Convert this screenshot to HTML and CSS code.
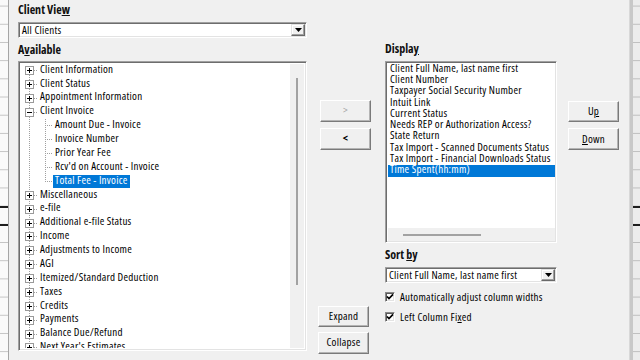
FILE: index.html
```html
<!DOCTYPE html>
<html>
<head>
<meta charset="utf-8">
<link rel="stylesheet" href="styles.css">
</head>
<body>
<div class="sheet-left"></div>
<div class="dialog">
  <div class="col col-a">
    <div class="label l-view">Client Vie<u>w</u></div>
    <div class="combo combo-view">
      <span class="combo-text">All Clients</span>
      <span class="drop"><svg width="7" height="4" viewBox="0 0 7 4"><path d="M0 0H7L3.5 4Z" fill="#000"/></svg></span>
    </div>
    <div class="label l-avail">A<u>v</u>ailable</div>
    <div class="tree sunken">
      <div class="tree-list">
        <div class="node"><span class="exp plus"></span><span class="conn"></span><span class="txt">Client Information</span></div>
        <div class="node"><span class="exp plus"></span><span class="conn"></span><span class="txt">Client Status</span></div>
        <div class="node"><span class="exp plus"></span><span class="conn"></span><span class="txt">Appointment Information</span></div>
        <div class="node"><span class="exp minus"></span><span class="conn"></span><span class="txt">Client Invoice</span></div>
        <div class="children">
          <div class="node"><span class="conn2"></span><span class="txt">Amount Due - Invoice</span></div>
          <div class="node"><span class="conn2"></span><span class="txt">Invoice Number</span></div>
          <div class="node"><span class="conn2"></span><span class="txt">Prior Year Fee</span></div>
          <div class="node"><span class="conn2"></span><span class="txt">Rcv'd on Account - Invoice</span></div>
          <div class="node"><span class="conn2"></span><span class="txt sel">Total Fee - Invoice</span></div>
        </div>
        <div class="node"><span class="exp plus"></span><span class="conn"></span><span class="txt">Miscellaneous</span></div>
        <div class="node"><span class="exp plus"></span><span class="conn"></span><span class="txt">e-file</span></div>
        <div class="node"><span class="exp plus"></span><span class="conn"></span><span class="txt">Additional e-file Status</span></div>
        <div class="node"><span class="exp plus"></span><span class="conn"></span><span class="txt">Income</span></div>
        <div class="node"><span class="exp plus"></span><span class="conn"></span><span class="txt">Adjustments to Income</span></div>
        <div class="node"><span class="exp plus"></span><span class="conn"></span><span class="txt">AGI</span></div>
        <div class="node"><span class="exp plus"></span><span class="conn"></span><span class="txt">Itemized/Standard Deduction</span></div>
        <div class="node"><span class="exp plus"></span><span class="conn"></span><span class="txt">Taxes</span></div>
        <div class="node"><span class="exp plus"></span><span class="conn"></span><span class="txt">Credits</span></div>
        <div class="node"><span class="exp plus"></span><span class="conn"></span><span class="txt">Payments</span></div>
        <div class="node"><span class="exp plus"></span><span class="conn"></span><span class="txt">Balance Due/Refund</span></div>
        <div class="node"><span class="exp plus"></span><span class="conn"></span><span class="txt">Next Year's Estimates</span></div>
      </div>
      <div class="vscroll"><div class="vthumb"></div></div>
    </div>
  </div>

  <div class="col col-b">
    <div class="btn btn-add disabled">&gt;</div>
    <div class="btn btn-remove">&lt;</div>
    <div class="btn btn-expand">Expand</div>
    <div class="btn btn-collapse">Collapse</div>
  </div>

  <div class="col col-c">
    <div class="label l-display">Displa<u>y</u></div>
    <div class="dlist sunken">
      <div class="dl-items">
        <div class="dl-item">Client Full Name, last name first</div>
        <div class="dl-item">Client Number</div>
        <div class="dl-item">Taxpayer Social Security Number</div>
        <div class="dl-item">Intuit Link</div>
        <div class="dl-item">Current Status</div>
        <div class="dl-item">Needs REP or Authorization Access?</div>
        <div class="dl-item">State Return</div>
        <div class="dl-item">Tax Import - Scanned Documents Status</div>
        <div class="dl-item">Tax Import - Financial Downloads Status</div>
        <div class="dl-item sel">Time Spent(hh:mm)</div>
      </div>
      <div class="hscroll"><div class="hthumb"></div></div>
    </div>
    <div class="label l-sort">Sort <u>b</u>y</div>
    <div class="combo combo-sort">
      <span class="combo-text">Client Full Name, last name first</span>
      <span class="drop"><svg width="7" height="4" viewBox="0 0 7 4"><path d="M0 0H7L3.5 4Z" fill="#000"/></svg></span>
    </div>
    <div class="chk chk-1"><span class="box"><svg width="8" height="8" viewBox="0 0 8 8"><path d="M1 3.5L3 5.6L7 1.4" fill="none" stroke="#000" stroke-width="1.7"/></svg></span><span class="chk-text">Automatically adjust column widths</span></div>
    <div class="chk chk-2"><span class="box"><svg width="8" height="8" viewBox="0 0 8 8"><path d="M1 3.5L3 5.6L7 1.4" fill="none" stroke="#000" stroke-width="1.7"/></svg></span><span class="chk-text">Left Column Fi<u>x</u>ed</span></div>
  </div>

  <div class="col col-d">
    <div class="btn btn-up">U<u>p</u></div>
    <div class="btn btn-down"><u>D</u>own</div>
  </div>
</div>
<div class="sheet-right"><div class="bar"></div><div class="cells"></div></div>
</body>
</html>
```

FILE: styles.css
```css
* { box-sizing: border-box; }
html, body { margin: 0; padding: 0; }
body {
  width: 640px;
  height: 360px;
  overflow: hidden;
  display: flex;
  background: #f0f0f0;
  font-family: "Open Sans", "Liberation Sans", Arial, sans-serif;
  font-stretch: 75%;
  font-size: 11px;
  letter-spacing: 0.25px;
  color: #000;
}
u { text-decoration: underline; text-underline-offset: 1px; }

/* spreadsheet edges */
.sheet-left {
  width: 9px;
  flex: none;
  border-right: 1px solid #a6a6a6;
  background-color: #fafafa;
  background-image:
    linear-gradient(to bottom, transparent 206px, #1e1e1e 206px, #1e1e1e 208px, transparent 208px, transparent 224px, #1e1e1e 224px, #1e1e1e 226px, transparent 226px),
    linear-gradient(to bottom, #c4c4c4 0, #c4c4c4 1px, transparent 1px);
  background-size: 100% 100%, 100% 18.2px;
  background-position: 0 0, 0 5.6px;
  background-repeat: no-repeat, repeat;
}
.sheet-right {
  width: 11px;
  flex: none;
  display: flex;
}
.sheet-right .bar {
  width: 4px;
  background: #c8c8c8;
  border-left: 1px solid #d8d8d8;
}
.sheet-right .cells {
  flex: 1;
  background-color: #ececec;
  background-image:
    linear-gradient(to bottom, transparent 206px, #1e1e1e 206px, #1e1e1e 208px, transparent 208px, transparent 224px, #1e1e1e 224px, #1e1e1e 226px, transparent 226px),
    linear-gradient(to bottom, #bdbdbd 0, #bdbdbd 1.2px, transparent 1.2px);
  background-size: 100% 100%, 100% 18.2px;
  background-position: 0 0, 0 5.6px;
  background-repeat: no-repeat, repeat;
}

/* dialog */
.dialog {
  flex: 1;
  display: flex;
  padding-left: 9px;
  background: #f0f0f0;
}
.col { display: flex; flex-direction: column; flex: none; }
.label {
  font-weight: bold;
  font-size: 12px;
  letter-spacing: 0;
  height: 13px;
  line-height: 12px;
  padding-bottom: 1px;
  color: #111;
}

.sunken {
  border: 1px solid;
  border-color: #a0a0a0 #ffffff #ffffff #a0a0a0;
  box-shadow: inset 1px 1px 0 #6d6d6d, inset -1px -1px 0 #e3e3e3;
}

/* combo */
.combo {
  height: 16px;
  display: flex;
  align-items: stretch;
  background: #fff;
  border: 1px solid;
  border-color: #a0a0a0 #ffffff #ffffff #a0a0a0;
  box-shadow: inset 1px 1px 0 #6d6d6d, inset -1px -1px 0 #e3e3e3;
  padding: 1px;
}
.combo-text {
  flex: 1;
  padding-left: 2px;
  line-height: 11px;
  padding-bottom: 1px;
  white-space: nowrap;
}
.drop {
  width: 14px;
  flex: none;
  display: flex;
  align-items: center;
  justify-content: center;
  background: #f0f0f0;
  border: 1px solid;
  border-color: #e3e3e3 #696969 #696969 #e3e3e3;
  box-shadow: inset -1px -1px 0 #a0a0a0, inset 1px 1px 0 #fff;
}

/* column A */
.col-a { width: 289px; }
.l-view { margin-top: 4px; }
.combo-view { margin-top: 4.5px; }
.l-avail { margin-top: 6px; }
.tree {
  margin-top: 4px;
  height: 290px;
  display: flex;
  padding: 2px;
  background: #fff;
}
.tree-list {
  flex: 1;
  overflow: hidden;
  background-image: repeating-linear-gradient(to bottom, #a0a0a0 0, #a0a0a0 1px, transparent 1px, transparent 2px);
  background-size: 1px 100%;
  background-position: 8px 7px;
  background-repeat: no-repeat;
}
.node {
  height: 13.88px;
  display: flex;
  align-items: center;
  white-space: nowrap;
}
.exp {
  width: 9px;
  height: 9px;
  margin-left: 4px;
  flex: none;
  border: 1px solid #9a9a9a;
  background: #fff;
  position: relative;
}
.exp::before {
  content: "";
  position: absolute;
  left: 1px;
  top: 3px;
  width: 5px;
  height: 1px;
  background: #000;
}
.exp.plus::after {
  content: "";
  position: absolute;
  left: 3px;
  top: 1px;
  width: 1px;
  height: 5px;
  background: #000;
}
.conn, .conn2 {
  height: 1px;
  flex: none;
  background-image: repeating-linear-gradient(to right, #a0a0a0 0, #a0a0a0 1px, transparent 1px, transparent 2px);
}
.conn { width: 4px; }
.conn2 { width: 8px; margin-left: 24px; }
.txt {
  padding: 0 2px 3px;
  height: 13.4px;
  line-height: 10.4px;
}
.txt.sel { background: #0078d7; color: #fff; }
.children {
  background-image: repeating-linear-gradient(to bottom, #a0a0a0 0, #a0a0a0 1px, transparent 1px, transparent 2px);
  background-size: 1px calc(100% - 7px);
  background-position: 24px 0;
  background-repeat: no-repeat;
}
.vscroll {
  width: 14px;
  flex: none;
  background: #f0f0f0;
  padding-top: 14px;
  padding-left: 6px;
}
.vthumb {
  width: 2px;
  height: 207px;
  background: #a2a2a2;
}

/* column B */
.col-b { width: 53px; margin-left: 11px; }
.btn {
  width: 51px;
  height: 22px;
  display: flex;
  align-items: center;
  justify-content: center;
  background: #f0f0f0;
  border: 1px solid;
  border-color: #ffffff #7a7a7a #7a7a7a #ffffff;
  box-shadow: inset -1px -1px 0 #b4b4b4;
  white-space: nowrap;
  line-height: 12px;
  padding-bottom: 1px;
}
.btn.disabled { color: #a4a4a4; }
.btn-add { margin-top: 99.5px; margin-left: 2px; }
.btn-remove { margin-top: 6px; margin-left: 2px; font-weight: bold; }
.btn-expand { margin-top: 156.5px; height: 21px; }
.btn-collapse { margin-top: 5px; height: 21.5px; }

/* column C */
.col-c { width: 172px; margin-left: 14px; }
.l-display { margin-top: 43px; }
.dlist {
  margin-top: 4.7px;
  height: 182.5px;
  display: flex;
  flex-direction: column;
  padding: 2px 1px 1px 2px;
  background: #fff;
}
.dl-items { flex: 1; overflow: hidden; }
.dl-item {
  height: 11.3px;
  line-height: 7.5px;
  padding: 0 0 3.8px 2px;
  white-space: nowrap;
}
.dl-item.sel { background: #0078d7; color: #fff; }
.hscroll {
  height: 13.4px;
  flex: none;
  background: #f0f0f0;
  padding-top: 6.5px;
  padding-left: 14.5px;
}
.hthumb { width: 78px; height: 2px; background: #a2a2a2; }
.l-sort { margin-top: 6px; }
.combo-sort { margin-top: 4.5px; }
.chk {
  display: flex;
  align-items: center;
  height: 13px;
  white-space: nowrap;
}
.chk-text { line-height: 11px; padding-bottom: 1px; }
.chk-1 { margin-top: 7.5px; }
.chk-2 { margin-top: 7px; }
.box {
  width: 10px;
  height: 10px;
  flex: none;
  margin-right: 5px;
  display: flex;
  align-items: center;
  justify-content: center;
  background: #fff;
  border: 1px solid;
  border-color: #8a8a8a #ffffff #ffffff #8a8a8a;
  box-shadow: inset 1px 1px 0 #5a5a5a, inset -1px -1px 0 #e3e3e3;
}

/* column D */
.col-d { width: 51px; margin-left: 11px; }
.btn-up { margin-top: 100.5px; height: 21.5px; }
.btn-down { margin-top: 6px; height: 22px; }
```
